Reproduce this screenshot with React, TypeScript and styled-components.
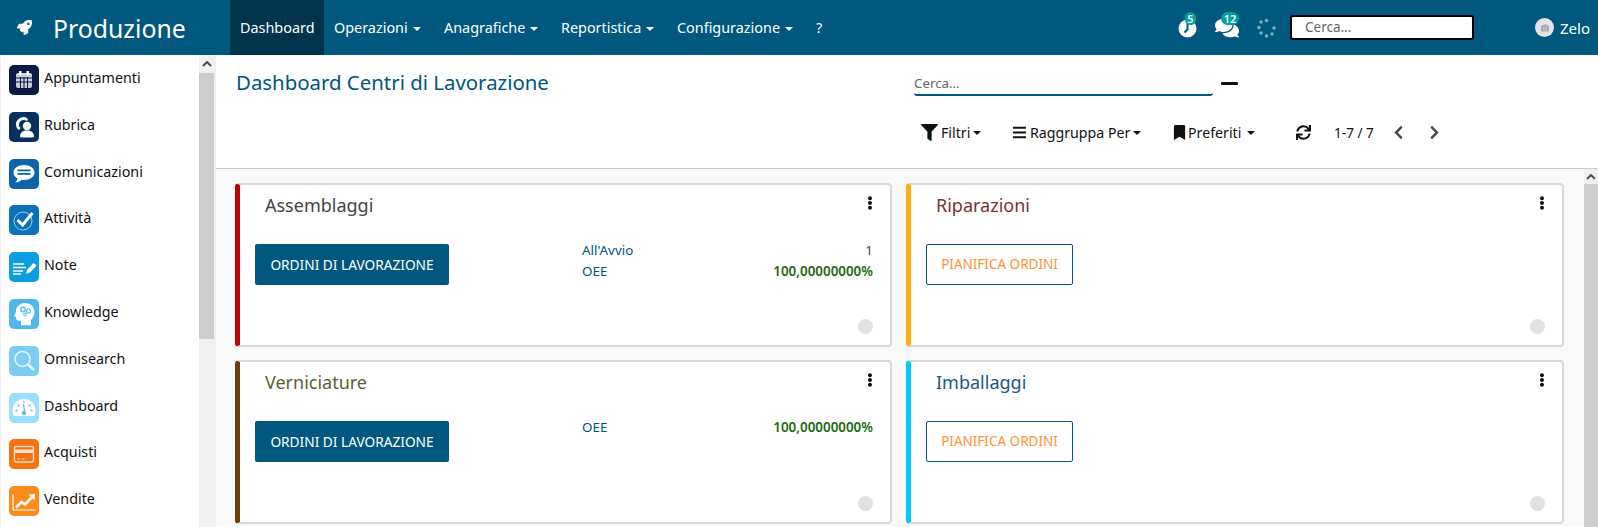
import React from "react";
import styled, { createGlobalStyle } from "styled-components";
import { FaRocket, FaFilter, FaBars, FaBookmark, FaSync, FaEllipsisV, FaChevronLeft, FaChevronRight, FaComments, FaCamera } from "react-icons/fa";

const FONT = `"Noto Sans", "Open Sans", Arial, sans-serif`;
const BLUE = "#00587f";

const Global = createGlobalStyle`
  html, body { margin: 0; padding: 0; background: #fff; overflow: hidden; }
  * { box-sizing: border-box; }
  body { font-family: ${FONT}; font-size: 14px; color: #111; }
`;

const Page = styled.div`
  width: 1598px;
  height: 527px;
  display: flex;
  flex-direction: column;
  overflow: hidden;
`;

const Header = styled.header`
  height: 55px;
  flex: none;
  background: ${BLUE};
  display: flex;
  align-items: stretch;
  color: #fff;
`;

const Brand = styled.div`
  width: 230px;
  flex: none;
  display: flex;
  align-items: center;
  padding-left: 17px;
  gap: 21px;
  font-size: 24.8px;
`;

const Nav = styled.nav`
  display: flex;
  align-items: stretch;
`;

const NavItem = styled.div<{ $active?: boolean; $w: number }>`
  width: ${(p) => p.$w}px;
  display: flex;
  align-items: center;
  padding-left: 10px;
  gap: 5px;
  white-space: nowrap;
  font-size: 14.4px;
  background: ${(p) => (p.$active ? "#00344d" : "transparent")};
`;

const Caret = styled.span<{ $dark?: boolean; $ml?: number }>`
  display: inline-block;
  width: 0;
  height: 0;
  margin-top: 2px;
  margin-left: ${(p) => p.$ml ?? 0}px;
  border-left: 4px solid transparent;
  border-right: 4px solid transparent;
  border-top: 4px solid ${(p) => (p.$dark ? "#111" : "#fff")};
`;

const Spacer = styled.div`
  flex: 1;
`;

const Systray = styled.div`
  display: flex;
  align-items: center;
  padding-right: 8px;
`;

const TrayIcon = styled.div<{ $w: number; $ml: number }>`
  position: relative;
  width: ${(p) => p.$w}px;
  margin-left: ${(p) => p.$ml}px;
  height: 24px;
  display: flex;
  align-items: center;
  justify-content: center;
`;

const Badge = styled.span<{ $r: number; $w: number }>`
  position: absolute;
  top: -4px;
  right: ${(p) => p.$r}px;
  width: ${(p) => p.$w}px;
  height: 13px;
  border-radius: 7px;
  background: #00a09d;
  color: #fff;
  font-size: 11px;
  font-weight: 600;
  line-height: 13px;
  text-align: center;
`;

const TopSearch = styled.div`
  width: 184px;
  height: 25px;
  margin-left: 13px;
  background: #fff;
  border: 2px solid #000;
  border-radius: 3px;
  color: #666;
  font-size: 13.5px;
  line-height: 21px;
  padding-left: 13px;
`;

const User = styled.div`
  margin-left: 61px;
  display: flex;
  align-items: center;
  gap: 6px;
  font-size: 15px;
`;

const Avatar = styled.span`
  width: 19px;
  height: 19px;
  border-radius: 50%;
  background: #e4e4e4;
  color: #a8a8a8;
  display: flex;
  align-items: center;
  justify-content: center;
`;

const Body = styled.div`
  flex: 1;
  min-height: 0;
  display: flex;
`;

const Sidebar = styled.aside`
  width: 216px;
  flex: none;
  display: flex;
  background: #f0f0f0;
`;

const SideList = styled.div`
  width: 198px;
  flex: none;
  margin-left: 1px;
  padding: 10px 0 0 8px;
  background: #fff;
`;

const SideRow = styled.div`
  height: 46.8px;
  display: flex;
  gap: 5px;
  font-size: 14.3px;
  color: #111;
  line-height: 26.5px;
`;

const Tile = styled.span<{ $bg: string }>`
  width: 30px;
  height: 30px;
  flex: none;
  border-radius: 5px;
  background: ${(p) => p.$bg};
  display: block;
`;

const SideBar = styled.div`
  width: 15px;
  flex: none;
  display: flex;
  flex-direction: column;
`;

const ScrollTrack = styled.div`
  width: 14px;
  flex: none;
  display: flex;
  flex-direction: column;
  background: #f0f0f0;
`;

const ScrollUp = styled.div<{ $h: number }>`
  height: ${(p) => p.$h}px;
  display: flex;
  align-items: center;
  justify-content: center;
  flex: none;
  background: #f0f0f0;
`;

const ScrollThumb = styled.div<{ $h: number }>`
  height: ${(p) => p.$h}px;
  background: #cdcdcd;
  flex: none;
`;

const Main = styled.main`
  flex: 1;
  min-width: 0;
  display: flex;
  flex-direction: column;
`;

const Control = styled.div`
  height: 114px;
  flex: none;
  border-bottom: 1px solid #ccc;
  display: grid;
  grid-template-columns: 678px 1fr;
  padding-left: 20px;
`;

const Title = styled.h1`
  margin: 12px 0 0;
  font-size: 20.4px;
  line-height: 30px;
  font-weight: 400;
  color: #005580;
`;

const ControlRight = styled.div`
  display: flex;
  flex-direction: column;
`;

const SearchRow = styled.div`
  display: flex;
  align-items: center;
  height: 30px;
  margin-top: 11px;
`;

const SearchField = styled.div`
  width: 299px;
  height: 30px;
  border-bottom: 2px solid ${BLUE};
  border-radius: 0 0 3px 3px;
  color: #666;
  font-size: 13.3px;
  line-height: 34px;
`;

const Minus = styled.span`
  width: 17px;
  height: 3px;
  margin: 5px 0 0 8px;
  background: #111;
  border-radius: 1px;
`;

const FilterRow = styled.div`
  display: flex;
  align-items: center;
  height: 24px;
  margin-top: 24px;
  padding-left: 7px;
  color: #111;
`;

const FilterBtn = styled.div<{ $w: number; $gap?: number }>`
  width: ${(p) => p.$w}px;
  display: flex;
  align-items: center;
  gap: ${(p) => p.$gap ?? 3}px;
  font-size: 14.2px;
  white-space: nowrap;
`;

const Pager = styled.span`
  font-size: 13.6px;
  width: 57px;
  padding-left: 23px;
  white-space: nowrap;
  box-sizing: content-box;
`;

const PagerBtn = styled.span`
  width: 36px;
  display: flex;
  color: #444;
`;

const Content = styled.div`
  flex: 1;
  min-height: 0;
  display: flex;
  background: #f9f9f9;
`;

const Kanban = styled.div`
  flex: 1;
  display: grid;
  grid-template-columns: 657px 658px;
  grid-auto-rows: 164px;
  column-gap: 14px;
  row-gap: 13px;
  padding: 14px 0 0 19px;
`;

const Card = styled.article<{ $color: string }>`
  position: relative;
  background: #fff;
  border: 2px solid #d9d9d9;
  border-left: 5px solid ${(p) => p.$color};
  border-radius: 4px;
  padding: 6px 17px 0 15px;
  display: flex;
  flex-direction: column;
`;

const CardTitle = styled.div<{ $color: string }>`
  font-size: 18px;
  line-height: 28px;
  padding-left: 10px;
  color: ${(p) => p.$color};
`;

const Kebab = styled.span`
  position: absolute;
  top: 11px;
  right: 13px;
  color: #111;
  display: flex;
`;

const CardBody = styled.div`
  display: grid;
  grid-template-columns: 327px 1fr;
  margin-top: 25px;
`;

const PrimaryBtn = styled.div`
  width: 194px;
  height: 41px;
  background: ${BLUE};
  color: #fff;
  border-radius: 2px;
  font-size: 13.7px;
  line-height: 41px;
  text-align: center;
  white-space: nowrap;
`;

const OutlineBtn = styled.div`
  width: 147px;
  height: 41px;
  border: 1px solid ${BLUE};
  color: #ff9234;
  border-radius: 2px;
  font-size: 13.5px;
  line-height: 39px;
  text-align: center;
  white-space: nowrap;
`;

const Stats = styled.div`
  display: flex;
  flex-direction: column;
  margin-top: -4px;
`;

const Stat = styled.div`
  display: flex;
  justify-content: space-between;
  height: 21px;
  line-height: 21px;
  font-size: 13.4px;
  color: #005580;
`;

const StatValue = styled.span<{ $good?: boolean }>`
  color: ${(p) => (p.$good ? "#1d6a0c" : "#444")};
  font-weight: ${(p) => (p.$good ? 600 : 400)};
`;

const Dot = styled.span`
  position: absolute;
  right: 17px;
  bottom: 11px;
  width: 15px;
  height: 15px;
  border-radius: 50%;
  background: #e1e1e1;
`;

const W = "#fff";

const icons = [
  <svg viewBox="0 0 30 30" key="a"><rect x="7" y="8" width="16" height="15" rx="2" fill="#c9ced9" /><path d="M7 13h16M7 17h16M11.500 12v11M15 12v11M18.500 12v11" stroke="#0a1b45" strokeWidth="1" /><rect x="10" y="6" width="2.500" height="4" fill="#fff" /><rect x="17.500" y="6" width="2.500" height="4" fill="#fff" /></svg>,
  <svg viewBox="0 0 30 30" key="b"><path d="M15 5c-5 0-8 4-8 7 0 3 1 5 3 6l1.500-2c-1-1-1.500-2-1.500-3.500C10 9.500 12 8 15 8c1 0 3 1 3 1l1-2s-2-2-4-2z" fill={W} /><circle cx="18" cy="14" r="4.200" fill={W} /><path d="M11 25c0-5 3-6.500 7-6.500s7 1.500 7 6.500c-3 .8-11 .8-14 0z" fill={W} /></svg>,
  <svg viewBox="0 0 30 30" key="c"><path d="M15 6c-6 0-10.500 3.200-10.500 7.500 0 2.500 1.500 4.500 4 6-.2 1.500-1.300 3-2.500 4 3 0 5-1 6.500-2.700.8.100 1.700.2 2.500.2 6 0 10.500-3.300 10.500-7.500S21 6 15 6z" fill={W} /><rect x="8.500" y="10.500" width="13" height="1.800" fill="#0c65a8" /><rect x="8.500" y="14" width="13" height="1.800" fill="#0c65a8" /></svg>,
  <svg viewBox="0 0 30 30" key="d"><circle cx="14" cy="16" r="9" fill="none" stroke="#a8cfee" strokeWidth="1" /><path d="M8.500 15l5 5 10-12" fill="none" stroke={W} strokeWidth="3" /></svg>,
  <svg viewBox="0 0 30 30" key="e"><path d="M4 12h11M4 15.500h13M4 19h10M4 22h8" stroke={W} strokeWidth="1.600" /><path d="M17 22l1-4 6.500-7 3 2.500-6.500 7z" fill={W} /></svg>,
  <svg viewBox="0 0 30 30" key="f"><path d="M16 4c-5.500 0-9 3.800-9 8.500 0 1.200-2 3.500-2 4.300 0 .8 2 .7 2 1.500 0 2 .4 3.500 3 3.500h2v4.500h10v-5.500c2.500-2 3.500-5 3.500-8C25.500 8 21.500 4 16 4z" fill={W} /><circle cx="14" cy="10.500" r="2.300" fill="none" stroke="#4db8ec" strokeWidth="1.200" /><circle cx="19.500" cy="12" r="2" fill="none" stroke="#4db8ec" strokeWidth="1.200" /><circle cx="16" cy="15.500" r="1.400" fill="none" stroke="#4db8ec" strokeWidth="1" /></svg>,
  <svg viewBox="0 0 30 30" key="g"><circle cx="13.500" cy="13" r="7.500" fill="none" stroke="#e8f6fd" strokeWidth="1.500" /><path d="M19 18.500l5.500 5" stroke="#e8f6fd" strokeWidth="2.500" strokeLinecap="round" /></svg>,
  <svg viewBox="0 0 30 30" key="h"><path d="M15 6C8 6 3.500 11.500 3.500 17.500c0 2 .5 4 1.300 5.500h20.400c.8-1.500 1.300-3.500 1.300-5.500C26.500 11.500 22 6 15 6z" fill={W} /><path d="M14.500 11l1 7" stroke="#5ab8e8" strokeWidth="1.200" /><circle cx="15" cy="20" r="2.200" fill="#5ab8e8" /><circle cx="7.500" cy="17.500" r="1.300" fill="#8fd0f0" /><circle cx="9.500" cy="12.500" r="1.300" fill="#8fd0f0" /><circle cx="15" cy="9" r="1" fill="#8fd0f0" /><circle cx="20.500" cy="12.500" r="1.300" fill="#8fd0f0" /><circle cx="22.500" cy="17.500" r="1.300" fill="#8fd0f0" /></svg>,
  <svg viewBox="0 0 30 30" key="i"><rect x="5.500" y="7.500" width="19" height="15.500" rx="1.500" fill="none" stroke="#fde0c8" strokeWidth="1.300" /><rect x="5.500" y="10.500" width="19" height="3.500" fill="#fde0c8" /><path d="M8 20h3M12.500 20h3" stroke="#fde0c8" strokeWidth="1" /></svg>,
  <svg viewBox="0 0 30 30" key="j"><path d="M4 8v16h23" fill="none" stroke={W} strokeWidth="1" /><path d="M7 21.500l5.500-5.500 3.500 2.500 6.500-7" fill="none" stroke={W} strokeWidth="2.600" /><path d="M19.500 8.500l6.500-.5-.5 6.500z" fill={W} /></svg>,
];

const sideItems: [string, string][] = [
  ["Appuntamenti", "#0a1b45"],
  ["Rubrica", "#05305f"],
  ["Comunicazioni", "#0c65a8"],
  ["Attività", "#0a71bd"],
  ["Note", "#0d9ee0"],
  ["Knowledge", "#4db8ec"],
  ["Omnisearch", "#7cccf3"],
  ["Dashboard", "#9cdeff"],
  ["Acquisti", "#f47310"],
  ["Vendite", "#fb8b1a"],
];

const Arrow = () => (
  <svg width="10" height="6" viewBox="0 0 10 6">
    <path d="M1 5l4-4 4 4" fill="none" stroke="#505050" strokeWidth="2" />
  </svg>
);

const ClockIcon = () => (
  <svg width="19" height="20" viewBox="0 0 19 20">
    <circle cx="9.500" cy="10.500" r="9" fill="#fff" />
    <path d="M9.500 4v7.500l-3 3" fill="none" stroke={BLUE} strokeWidth="2" />
  </svg>
);

const Spinner = () => (
  <svg width="20" height="20" viewBox="0 0 20 20" fill="#7fa8be">
    <circle cx="9.500" cy="2.500" r="1.800" />
    <circle cx="17" cy="10" r="1.800" />
    <circle cx="15" cy="16" r="1.800" />
    <circle cx="9.500" cy="18" r="1.800" />
    <circle cx="4" cy="15" r="1.800" />
    <circle cx="2" cy="9.500" r="1.800" />
    <circle cx="4" cy="4" r="1.800" />
  </svg>
);

type CardData = { name: string; bar: string; color: string; primary: boolean; stats?: [string, string, boolean][] };

const cards: CardData[] = [
  { name: "Assemblaggi", bar: "#c00000", color: "#444", primary: true, stats: [["All'Avvio", "1", false], ["OEE", "100,00000000%", true]] },
  { name: "Riparazioni", bar: "#ffac12", color: "#7a3131", primary: false },
  { name: "Verniciature", bar: "#6b3d08", color: "#59622f", primary: true, stats: [["OEE", "100,00000000%", true]] },
  { name: "Imballaggi", bar: "#00c8ff", color: "#15597f", primary: false },
];

export default function App() {
  return (
    <Page>
      <Global />
      <Header>
        <Brand>
          <FaRocket size={15} />
          <span>Produzione</span>
        </Brand>
        <Nav>
          <NavItem $active $w={94}>Dashboard</NavItem>
          <NavItem $w={110}>Operazioni <Caret /></NavItem>
          <NavItem $w={117}>Anagrafiche <Caret /></NavItem>
          <NavItem $w={116}>Reportistica <Caret /></NavItem>
          <NavItem $w={139}>Configurazione <Caret /></NavItem>
          <NavItem $w={30}>?</NavItem>
        </Nav>
        <Spacer />
        <Systray>
          <TrayIcon $w={19} $ml={0}><ClockIcon /><Badge $r={1} $w={11}>5</Badge></TrayIcon>
          <TrayIcon $w={24} $ml={18}><FaComments size={24} /><Badge $r={0} $w={18}>12</Badge></TrayIcon>
          <TrayIcon $w={20} $ml={18}><Spinner /></TrayIcon>
          <TopSearch>Cerca...</TopSearch>
          <User>
            <Avatar><FaCamera size={8} /></Avatar>
            <span>Zelo</span>
          </User>
        </Systray>
      </Header>
      <Body>
        <Sidebar>
          <SideList>
            {sideItems.map(([name, bg], i) => (
              <SideRow key={name}>
                <Tile $bg={bg}>{icons[i]}</Tile>
                <span>{name}</span>
              </SideRow>
            ))}
          </SideList>
          <SideBar>
            <ScrollUp $h={18}><Arrow /></ScrollUp>
            <ScrollThumb $h={266} />
          </SideBar>
        </Sidebar>
        <Main>
          <Control>
            <Title>Dashboard Centri di Lavorazione</Title>
            <ControlRight>
              <SearchRow>
                <SearchField>Cerca...</SearchField>
                <Minus />
              </SearchRow>
              <FilterRow>
                <FilterBtn $w={91}><FaFilter size={17} /> Filtri <Caret $dark /></FilterBtn>
                <FilterBtn $w={160}><FaBars size={15} /> Raggruppa Per <Caret $dark /></FilterBtn>
                <FilterBtn $w={124} $gap={1}><FaBookmark size={15} /> Preferiti <Caret $dark $ml={5} /></FilterBtn>
                <FaSync size={15} />
                <Pager>1-7 / 7</Pager>
                <PagerBtn><FaChevronLeft size={15} /></PagerBtn>
                <PagerBtn><FaChevronRight size={15} /></PagerBtn>
              </FilterRow>
            </ControlRight>
          </Control>
          <Content>
            <Kanban>
              {cards.map((c) => (
                <Card key={c.name} $color={c.bar}>
                  <CardTitle $color={c.color}>{c.name}</CardTitle>
                  <Kebab><FaEllipsisV size={14} /></Kebab>
                  <CardBody>
                    <div>{c.primary ? <PrimaryBtn>ORDINI DI LAVORAZIONE</PrimaryBtn> : <OutlineBtn>PIANIFICA ORDINI</OutlineBtn>}</div>
                    {c.stats && (
                      <Stats>
                        {c.stats.map(([k, v, good]) => (
                          <Stat key={k}><span>{k}</span><StatValue $good={good}>{v}</StatValue></Stat>
                        ))}
                      </Stats>
                    )}
                  </CardBody>
                  <Dot />
                </Card>
              ))}
            </Kanban>
            <ScrollTrack>
              <ScrollUp $h={15}><Arrow /></ScrollUp>
              <ScrollThumb $h={344} />
            </ScrollTrack>
          </Content>
        </Main>
      </Body>
    </Page>
  );
}
